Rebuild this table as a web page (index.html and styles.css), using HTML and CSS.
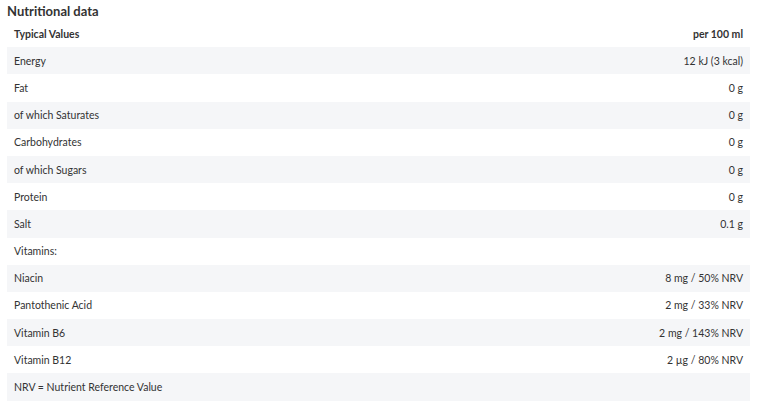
FILE: index.html
```html
<!DOCTYPE html>
<html lang="en">
<head>
    <meta charset="UTF-8">
    <title>Nutritional data</title>
    <link rel="stylesheet" href="styles.css">
</head>
<body>
    <div class="nutrition">
        <h3 class="nutrition-title">Nutritional data</h3>
        <table class="nutrition-table">
            <thead>
                <tr>
                    <th>Typical Values</th>
                    <th class="value">per 100 ml</th>
                </tr>
            </thead>
            <tbody>
                <tr><td>Energy</td><td class="value">12 kJ (3 kcal)</td></tr>
                <tr><td>Fat</td><td class="value">0 g</td></tr>
                <tr><td>of which Saturates</td><td class="value">0 g</td></tr>
                <tr><td>Carbohydrates</td><td class="value">0 g</td></tr>
                <tr><td>of which Sugars</td><td class="value">0 g</td></tr>
                <tr><td>Protein</td><td class="value">0 g</td></tr>
                <tr><td>Salt</td><td class="value">0.1 g</td></tr>
                <tr><td>Vitamins:</td><td class="value"></td></tr>
                <tr><td>Niacin</td><td class="value">8 mg / 50% NRV</td></tr>
                <tr><td>Pantothenic Acid</td><td class="value">2 mg / 33% NRV</td></tr>
                <tr><td>Vitamin B6</td><td class="value">2 mg / 143% NRV</td></tr>
                <tr><td>Vitamin B12</td><td class="value">2 µg / 80% NRV</td></tr>
                <tr><td>NRV = Nutrient Reference Value</td><td class="value"></td></tr>
            </tbody>
        </table>
    </div>
</body>
</html>
```

FILE: styles.css
```css
body {
    margin: 0;
    background: #fff;
    font-family: Lato, "Liberation Sans", sans-serif;
    color: #333;
}

.nutrition {
    padding: 2px 11px 0 7px;
}

.nutrition-title {
    margin: 0;
    font-size: 13px;
    font-weight: bold;
    line-height: 18px;
    color: #333;
}

.nutrition-table {
    width: 100%;
    border-collapse: collapse;
    font-size: 10.5px;
}

.nutrition-table th,
.nutrition-table td {
    height: 27.2px;
    padding: 0 7px;
    text-align: left;
    vertical-align: middle;
}

.nutrition-table th {
    font-weight: bold;
}

.nutrition-table .value {
    text-align: right;
}

.nutrition-table tbody tr:nth-child(odd) {
    background: #f5f6f8;
}
```
